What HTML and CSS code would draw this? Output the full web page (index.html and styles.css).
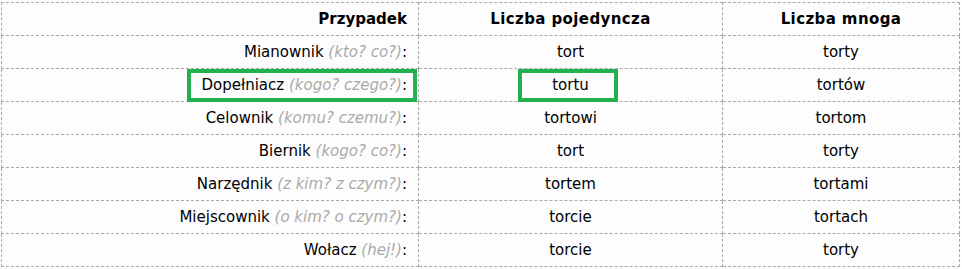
FILE: index.html
```html
<!DOCTYPE html>
<html lang="pl">
<head>
<meta charset="utf-8">
<link rel="stylesheet" href="styles.css">
</head>
<body>
<div class="wrap">
<table class="cases">
  <colgroup>
    <col class="c1"><col class="c2"><col class="c3">
  </colgroup>
  <tr class="head"><th class="case">Przypadek</th><th>Liczba pojedyncza</th><th>Liczba mnoga</th></tr>
  <tr><td class="case">Mianownik <i>(kto? co?)</i>:</td><td>tort</td><td>torty</td></tr>
  <tr><td class="case">Dopełniacz <i>(kogo? czego?)</i>:</td><td>tortu</td><td>tortów</td></tr>
  <tr><td class="case">Celownik <i>(komu? czemu?)</i>:</td><td>tortowi</td><td>tortom</td></tr>
  <tr><td class="case">Biernik <i>(kogo? co?)</i>:</td><td>tort</td><td>torty</td></tr>
  <tr><td class="case">Narzędnik <i>(z kim? z czym?)</i>:</td><td>tortem</td><td>tortami</td></tr>
  <tr><td class="case">Miejscownik <i>(o kim? o czym?)</i>:</td><td>torcie</td><td>tortach</td></tr>
  <tr><td class="case">Wołacz <i>(hej!)</i>:</td><td>torcie</td><td>torty</td></tr>
</table>
<div class="mark mark-case"></div>
<div class="mark mark-form"></div>
</div>
</body>
</html>
```
FILE: styles.css
```css
html, body {
  margin: 0;
  padding: 0;
  background: #fdfdfd;
}
.wrap {
  position: relative;
  padding: 2px 0 0 1px;
  width: 958px;
}
.cases {
  border-collapse: collapse;
  width: 958px;
  table-layout: fixed;
  font-family: "DejaVu Sans", Verdana, sans-serif;
  font-size: 15px;
  color: #000;
}
.c1 { width: 417px; }
.c2 { width: 304px; }
.c3 { width: 237px; }
.cases th, .cases td {
  border: 1px dashed #aaa;
  height: 33px;
  padding: 0 11px;
  text-align: center;
  vertical-align: middle;
  box-sizing: border-box;
  white-space: nowrap;
}
.cases th {
  font-weight: bold;
  letter-spacing: 0.4px;
}
.cases th.case { letter-spacing: 0; }
.cases .case { text-align: right; }
.cases i { color: #aaa; }
.mark {
  position: absolute;
  border: 4px solid #22b14c;
  box-sizing: border-box;
}
.mark-case { left: 187px; top: 69px; width: 230px; height: 33px; }
.mark-form { left: 518px; top: 69px; width: 100px; height: 33px; }
```
